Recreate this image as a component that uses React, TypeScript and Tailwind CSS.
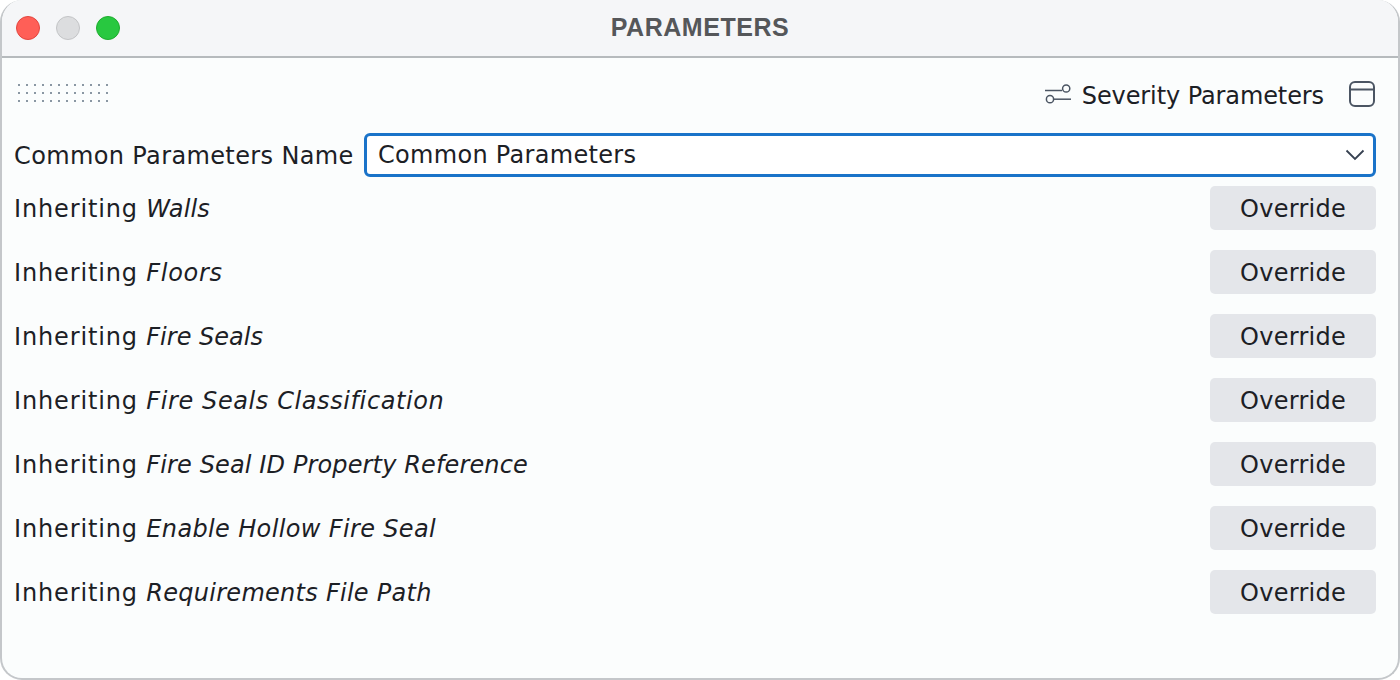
import React from 'react';

const rows = [
  { name: 'Walls', track: 'tracking-[0.1px]' },
  { name: 'Floors', track: 'tracking-[0.7px]' },
  { name: 'Fire Seals', track: 'tracking-[0px]' },
  { name: 'Fire Seals Classification', track: 'tracking-[0.6px]' },
  { name: 'Fire Seal ID Property Reference', track: 'tracking-[0.13px]' },
  { name: 'Enable Hollow Fire Seal', track: 'tracking-[0.36px]' },
  { name: 'Requirements File Path', track: 'tracking-[0.27px]' },
];

const SliderIcon = () => (
  <svg width="26" height="20" viewBox="0 0 26 20" fill="none" stroke="#4b5563" strokeWidth="1.5">
    <path d="M0 6.5h17" />
    <circle cx="21.2" cy="4.5" r="3.6" />
    <circle cx="5" cy="15.2" r="3.6" />
    <path d="M9 15.2h17" />
  </svg>
);

const PanelIcon = () => (
  <svg width="26" height="26" viewBox="0 0 26 26" fill="none" stroke="#4b5563" strokeWidth="2">
    <rect x="1" y="1" width="24" height="24" rx="5" />
    <path d="M1 8.5h24" />
  </svg>
);

const Chevron = () => (
  <svg width="20" height="12" viewBox="0 0 20 12" fill="none" stroke="#374151" strokeWidth="1.8">
    <path d="M1.5 1.5L10 10l8.5-8.5" />
  </svg>
);

const dots = Array.from({ length: 36 });

export default function App() {
  return (
    <div className="w-[1400px] h-[680px] bg-white font-['DejaVu_Sans',sans-serif] text-[#1c2025]">
      <div className="h-full flex flex-col rounded-[22px] overflow-hidden border-2 border-t-0 border-[#c4c7ca] bg-[#fbfdfd]">
        {/* Title bar */}
        <div className="h-[58px] shrink-0 flex items-center relative bg-[#f5f6f8] border-b-2 border-[#b6babd]">
          <div className="flex items-center gap-4 pl-[14px]">
            <span className="w-6 h-6 rounded-full bg-[#ff5f57] border border-[#e2463f]" />
            <span className="w-6 h-6 rounded-full bg-[#dcdddf] border border-[#c3c4c6]" />
            <span className="w-6 h-6 rounded-full bg-[#28c840] border border-[#1eac2e]" />
          </div>
          <div className="absolute inset-0 flex items-center justify-center font-['Liberation_Sans',sans-serif] font-bold text-[25px] tracking-[0.55px] text-[#55575a]">
            PARAMETERS
          </div>
        </div>

        {/* Body */}
        <div className="flex flex-col pl-3 pr-[22px]">
          {/* Toolbar */}
          <div className="h-[72px] flex items-center justify-between">
            <div className="grid grid-cols-[repeat(12,2px)] gap-[6px] pl-[4px] mb-[2px]">
              {dots.map((_, i) => (
                <span key={i} className="w-[2px] h-[2px] bg-[#8a97a3]" />
              ))}
            </div>
            <div className="flex items-center mr-[1px]">
              <SliderIcon />
              <span className="ml-[11px] text-[24px] tracking-[-0.1px] leading-[28px] pt-[3px]">Severity Parameters</span>
              <span className="ml-[25px]">
                <PanelIcon />
              </span>
            </div>
          </div>

          {/* Name select */}
          <div className="flex items-center h-[44px] mt-[3px]">
            <span className="w-[350px] text-[24px] tracking-[0.37px] whitespace-nowrap pt-[1px]">Common Parameters Name</span>
            <div className="flex-1 h-[44px] flex items-center justify-between pl-[11px] pr-2 bg-white border-[3px] border-[#1a73c9] rounded-[6px]">
              <span className="text-[24px] tracking-[0.3px]">Common Parameters</span>
              <Chevron />
            </div>
          </div>

          {/* Inherited rows */}
          <div className="flex flex-col gap-5 mt-[9px]">
            {rows.map((row) => (
              <div key={row.name} className="flex items-center justify-between h-[44px]">
                <span className="text-[24px] tracking-[0.85px] whitespace-nowrap pt-[2px]">
                  Inheriting <em className={`italic ${row.track}`}>{row.name}</em>
                </span>
                <button className="w-[166px] h-[44px] pt-[2px] bg-[#e4e6ea] rounded-[5px] text-[24px] tracking-[0.25px]">
                  Override
                </button>
              </div>
            ))}
          </div>
        </div>
      </div>
    </div>
  );
}
